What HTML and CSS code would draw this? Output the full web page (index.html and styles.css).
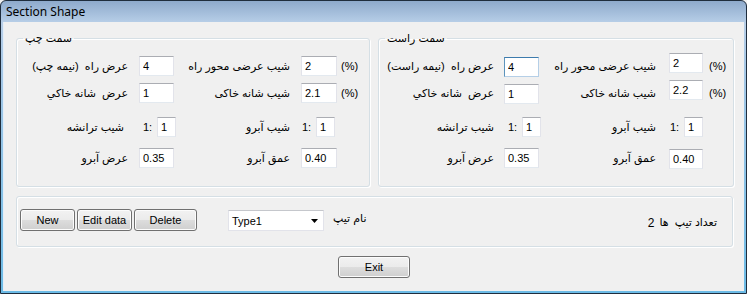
FILE: index.html
```html
<!DOCTYPE html>
<html lang="fa">
<head>
    <meta charset="UTF-8">
    <meta name="viewport" content="width=device-width, initial-scale=1.0">
    <title>Section Shape</title>
    <link rel="stylesheet" href="styles.css">
</head>
<body>
    <div class="window">
        <div class="titlebar" dir="ltr">Section Shape</div>
        <div class="client" dir="ltr">
            <div class="sides">
                <fieldset class="side side-left">
                    <legend dir="rtl">سمت چپ</legend>
                    <div class="side-grid">
                        <span class="lbl" dir="rtl">عرض راه&nbsp;&nbsp;(نیمه چپ)</span>
                        <input class="txt" value="4">
                        <span class="lbl" dir="rtl">شیب عرضی محور راه</span>
                        <input class="txt" value="2">
                        <span class="pct">(%)</span>

                        <span class="lbl" dir="rtl">عرض&nbsp;&nbsp;شانه خاکي</span>
                        <input class="txt" value="1">
                        <span class="lbl" dir="rtl">شیب شانه خاکی</span>
                        <input class="txt" value="2.1">
                        <span class="pct">(%)</span>

                        <span class="lbl lbl-ratio" dir="rtl">شیب ترانشه</span>
                        <div class="ratio"><span>1:</span><input class="txt txt-small" value="1"></div>
                        <span class="lbl" dir="rtl">شیب آبرو</span>
                        <div class="ratio ratio-b"><span>1:</span><input class="txt txt-small" value="1"></div>
                        <span></span>

                        <span class="lbl" dir="rtl">عرض آبرو</span>
                        <input class="txt" value="0.35">
                        <span class="lbl" dir="rtl">عمق آبرو</span>
                        <input class="txt" value="0.40">
                        <span></span>
                    </div>
                </fieldset>

                <fieldset class="side side-right">
                    <legend dir="rtl">سمت راست</legend>
                    <div class="side-grid">
                        <span class="lbl" dir="rtl">عرض راه&nbsp;&nbsp;(نیمه راست)</span>
                        <input class="txt txt-focus nudge-down" value="4">
                        <span class="lbl" dir="rtl">شیب عرضی محور راه</span>
                        <input class="txt nudge-up" value="2">
                        <span class="pct">(%)</span>

                        <span class="lbl" dir="rtl">عرض&nbsp;&nbsp;شانه خاکي</span>
                        <input class="txt nudge-down" value="1">
                        <span class="lbl" dir="rtl">شیب شانه خاکی</span>
                        <input class="txt nudge-up" value="2.2">
                        <span class="pct">(%)</span>

                        <span class="lbl lbl-ratio" dir="rtl">شیب ترانشه</span>
                        <div class="ratio"><span>1:</span><input class="txt txt-small" value="1"></div>
                        <span class="lbl" dir="rtl">شیب آبرو</span>
                        <div class="ratio ratio-b"><span>1:</span><input class="txt txt-small" value="1"></div>
                        <span></span>

                        <span class="lbl" dir="rtl">عرض آبرو</span>
                        <input class="txt" value="0.35">
                        <span class="lbl" dir="rtl">عمق آبرو</span>
                        <input class="txt nudge-down" value="0.40">
                        <span></span>
                    </div>
                </fieldset>
            </div>

            <div class="types">
                <button class="btn btn-new">New</button>
                <button class="btn btn-edit">Edit data</button>
                <button class="btn btn-delete">Delete</button>
                <div class="combo">
                    <span>Type1</span>
                    <svg width="7" height="4" viewBox="0 0 7 4"><path d="M0 0h7L3.5 4z" fill="#000"/></svg>
                </div>
                <span class="type-name" dir="rtl">نام تیپ</span>
                <span class="type-count">2</span>
                <span class="type-count-lbl" dir="rtl">تعداد تیپ&nbsp;&nbsp;ها</span>
            </div>

            <div class="footer">
                <button class="btn btn-exit">Exit</button>
            </div>
        </div>
    </div>
</body>
</html>
```

FILE: styles.css
```css
* {
    margin: 0px;
    padding: 0px;
    box-sizing: border-box;
}

body {
    width: 747px;
    height: 294px;
    overflow: hidden;
    font-family: "Liberation Sans", "DejaVu Sans", Arial, sans-serif;
    font-size: 11px;
    color: #000;
    background-color: #f0f0f0;
}

.window {
    width: 747px;
    height: 294px;
    border: 1px solid #1f2d3d;
    border-radius: 6px 6px 0 0;
    padding: 0 2px 2px 2px;
    background: linear-gradient(#8eaacc 0px, #b8cfe8 22px, #a8c8e6 60px, #6cbbe6 100%);
    display: flex;
    flex-direction: column;
}

.titlebar {
    height: 21px;
    line-height: 22px;
    padding-left: 3px;
    font-family: "Noto Sans", "Open Sans", sans-serif;
    font-size: 12px;
    color: #000;
}

.client {
    flex: 1;
    background-color: #f0f0f0;
    border-left: 1px solid #e4eef8;
    display: flex;
    flex-direction: column;
}

.sides {
    display: flex;
    gap: 8px;
    padding: 10px 0 0 12px;
}

.side {
    border: 1px solid #d5dfe5;
    border-radius: 3px;
    box-shadow: inset 1px 1px 0 #fff, 1px 1px 0 #fff;
    padding: 0 0 18px 0;
    min-inline-size: 0;
}

.side legend {
    margin-left: 6px;
    padding: 0 2px;
    line-height: 13px;
    font-size: 11px;
}

.side-left {
    width: 354px;
}

.side-right {
    width: 356px;
}

.side-grid {
    display: grid;
    grid-template-rows: 20px 27px 34px 31px;
    align-items: end;
    padding-top: 11px;
}

.side-left .side-grid {
    grid-template-columns: 122px 35px 127px 36px 32px;
}

.side-right .side-grid {
    grid-template-columns: 125px 35px 130px 34px 30px;
}

.lbl {
    height: 20px;
    line-height: 20px;
    text-align: right;
    padding-right: 11px;
    white-space: nowrap;
}

.lbl-ratio {
    padding-right: 15px;
}

.side-right .lbl {
    padding-right: 10px;
}

.side-right .lbl:nth-child(5n+3) {
    padding-right: 13px;
}

.pct {
    height: 20px;
    line-height: 20px;
    padding-left: 4px;
}

.side-right .pct {
    padding-left: 6px;
}

.txt {
    width: 100%;
    height: 20px;
    font-family: "Liberation Sans", Arial, sans-serif;
    font-size: 11px;
    padding: 0 3px;
    background-color: #fff;
    border: 1px solid #e2e3ea;
    border-top-color: #abadb3;
    border-bottom-color: #e3e9ef;
    outline: none;
}

.txt-focus {
    border-color: #b5cfe7;
    border-top-color: #3d7bad;
    border-left-color: #5c93bc;
}

.nudge-down {
    margin-bottom: -1px;
}

.nudge-up {
    margin-bottom: 3px;
}

.ratio {
    display: flex;
    align-items: center;
    height: 20px;
    width: 37px;
}

.ratio span {
    width: 18px;
    padding-left: 4px;
}

.ratio-b span {
    padding-left: 1px;
    width: 15px;
}

.txt-small {
    width: 19px;
}

.types {
    display: flex;
    align-items: center;
    width: 717px;
    height: 51px;
    margin: 9px 0 0 12px;
    padding: 0 15px 4px 3px;
    border: 1px solid #d5dfe5;
    border-radius: 3px;
    box-shadow: inset 1px 1px 0 #fff, 1px 1px 0 #fff;
}

.btn {
    height: 22px;
    font-family: "Liberation Sans", Arial, sans-serif;
    font-size: 11px;
    color: #000;
    border: 1px solid #707070;
    border-radius: 3px;
    background: linear-gradient(#f2f2f2 0%, #ebebeb 50%, #dddddd 51%, #cfcfcf 100%);
    box-shadow: inset 0 0 0 1px #fcfcfc;
}

.btn-new {
    width: 55px;
}

.btn-edit {
    width: 55px;
    margin-left: 2px;
}

.btn-delete {
    width: 63px;
    margin-left: 2px;
}

.combo {
    display: flex;
    align-items: center;
    justify-content: space-between;
    width: 96px;
    height: 21px;
    margin-left: 31px;
    margin-top: 2px;
    padding: 0 5px 0 3px;
    background-color: #fff;
    border: 1px solid #e2e3ea;
    border-top-color: #c5c7cc;
}

.type-name {
    margin-left: 9px;
    margin-top: -2px;
}

.type-count {
    margin-left: auto;
    margin-top: 6px;
    font-size: 12px;
}

.type-count-lbl {
    margin-left: 5px;
    margin-top: 6px;
}

.footer {
    display: flex;
    justify-content: center;
    padding-top: 9px;
}

.btn-exit {
    width: 72px;
}
```
